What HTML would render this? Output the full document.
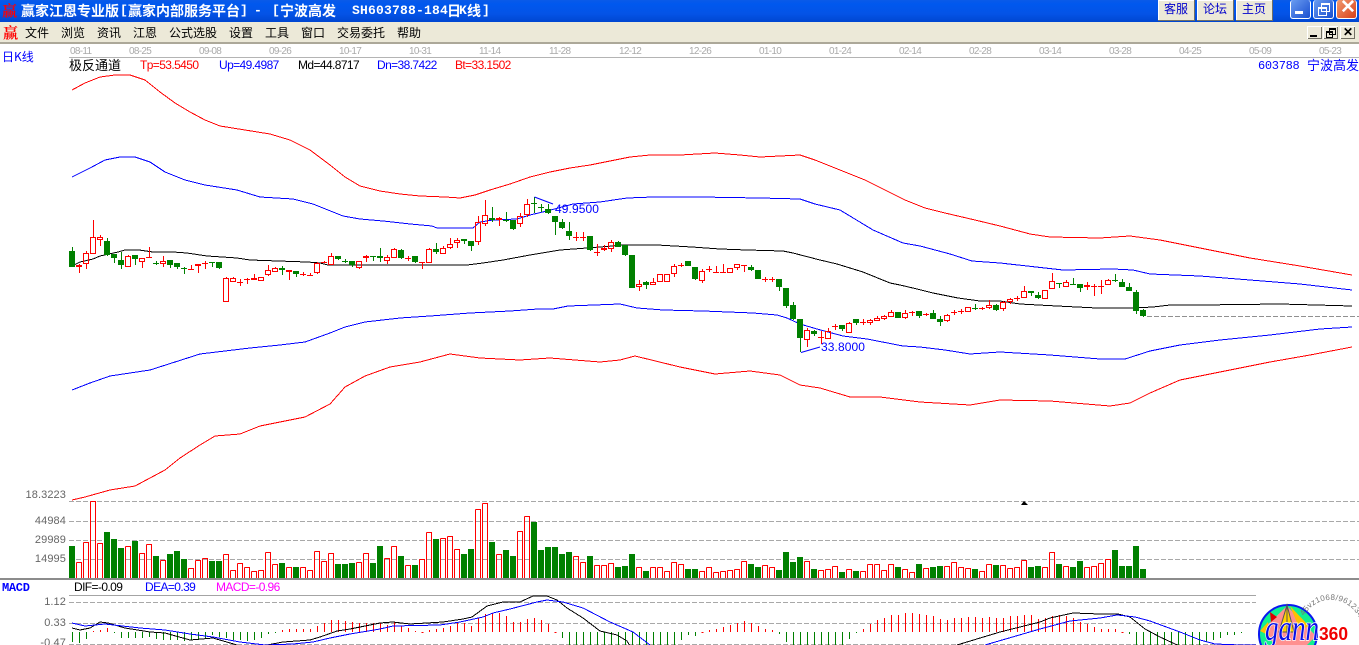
<!DOCTYPE html>
<html lang="zh"><head><meta charset="utf-8"><title>赢家江恩专业版</title>
<style>
html,body{margin:0;padding:0;background:#fff}
#p{position:relative;width:1359px;height:645px;overflow:hidden;background:#fff;font-family:"Liberation Sans","WenQuanYi Zen Hei",sans-serif}
#p div,#p span.a{position:absolute;white-space:pre}
#tb{left:0;top:0;width:1359px;height:22px;background:linear-gradient(#0a5ae8 0,#0058ee 4px,#0453e6 14px,#0046d0 22px)}
.t{top:2px;color:#fff;font:bold 14px/18px "Noto Sans CJK SC",sans-serif}
.tm{top:2px;color:#fff;font:bold 13px/18px "Liberation Mono",monospace;letter-spacing:.2px}
#mb{left:0;top:22px;width:1359px;height:20px;background:#ece9d8}
#ml{left:0;top:42px;width:1359px;height:2px;background:#aca899}
.m{top:24px;font:12px/18px "WenQuanYi Zen Hei","Noto Sans CJK SC",sans-serif;color:#000}
.b{top:0;height:20px;width:36px;background:#ece9d8;border-right:1px solid #716f64;border-bottom:1px solid #716f64;box-shadow:inset 1px 1px 0 #fff;color:#00c;text-align:center;font:12px/18px "WenQuanYi Zen Hei","Noto Sans CJK SC",sans-serif}
.d{top:46px;font:10px/11px "Liberation Sans",sans-serif;color:#aaa;letter-spacing:-.7px}
.i{top:58px;font:12px/15px "Liberation Sans",sans-serif;letter-spacing:-.6px}
.y{font:11px/12px "Liberation Sans",sans-serif;color:#666;text-align:right;width:66px;left:0;letter-spacing:.1px}
.x{border-radius:3px;top:0;width:19px;height:18px;border:1px solid #fff;border-top:0}
</style></head><body>
<div id="p">
<svg id="s" width="1359" height="645" style="position:absolute;left:0;top:0"></svg>
<div id="tb"></div>
<div style="left:2px;top:1px;color:#f00;font:bold 15px/19px 'Noto Serif CJK SC',serif">赢</div>
<div class="t" style="left:21px">赢家江恩专业版</div><div class="tm" style="left:120px">[</div>
<div class="t" style="left:128px">赢家内部服务平台</div><div class="tm" style="left:240px">]</div>
<div class="tm" style="left:254px">-</div><div class="tm" style="left:272px">[</div>
<div class="t" style="left:280px">宁波高发</div><div class="tm" style="left:352px">SH603788-184</div>
<div class="t" style="left:447px">日</div><div class="tm" style="left:459px">K</div><div class="t" style="left:467px">线</div><div class="tm" style="left:482px">]</div>
<div class="b" style="left:1158px">客服</div><div class="b" style="left:1197px">论坛</div><div class="b" style="left:1236px">主页</div>
<div class="x" style="left:1290px;background:linear-gradient(135deg,#6a9cf0,#1a4fd0)"></div>
<div style="left:1295px;top:11px;width:8px;height:3px;background:#fff"></div>
<div class="x" style="left:1313px;background:linear-gradient(135deg,#6a9cf0,#1a4fd0)"></div>
<div style="left:1318px;top:7px;width:7px;height:6px;border:1px solid #fff;border-top-width:2px"></div>
<div style="left:1321px;top:3px;width:7px;height:6px;border:1px solid #fff;border-top-width:2px"></div>
<div class="x" style="left:1336px;background:linear-gradient(135deg,#f09a70,#d8401a)"></div>
<div style="left:1340px;top:-3px;color:#fff;font:bold 19px/22px 'Liberation Sans',sans-serif">✕</div>
<div id="mb"></div><div id="ml"></div>
<div style="left:3px;top:23px;color:#f00;font:bold 15px/19px 'Noto Serif CJK SC',serif">赢</div>
<div class="m" style="left:25px">文件</div><div class="m" style="left:61px">浏览</div><div class="m" style="left:97px">资讯</div><div class="m" style="left:133px">江恩</div><div class="m" style="left:169px">公式选股</div><div class="m" style="left:229px">设置</div><div class="m" style="left:265px">工具</div><div class="m" style="left:301px">窗口</div><div class="m" style="left:337px">交易委托</div><div class="m" style="left:397px">帮助</div>
<div style="left:1307px;top:26px;width:15px;height:13px;background:#ece9d8;box-shadow:inset 1px 1px 0 #fff,inset -1px -1px 0 #716f64"></div><div style="left:1310px;top:35px;width:7px;height:2px;background:#000"></div>
<div style="left:1323px;top:26px;width:15px;height:13px;background:#ece9d8;box-shadow:inset 1px 1px 0 #fff,inset -1px -1px 0 #716f64"></div><div style="left:1326px;top:31px;width:5px;height:4px;border:1px solid #000;border-top-width:2px"></div><div style="left:1329px;top:28px;width:5px;height:4px;border:1px solid #000;border-top-width:2px"></div>
<div style="left:1340px;top:26px;width:15px;height:13px;background:#ece9d8;box-shadow:inset 1px 1px 0 #fff,inset -1px -1px 0 #716f64"></div><div style="left:1343px;top:25px;color:#000;font:bold 12px/15px 'Liberation Sans',sans-serif">✕</div>
<div class="d" style="left:70px">08-11</div><div class="d" style="left:129px">08-25</div><div class="d" style="left:199px">09-08</div><div class="d" style="left:269px">09-26</div><div class="d" style="left:339px">10-17</div><div class="d" style="left:409px">10-31</div><div class="d" style="left:479px">11-14</div><div class="d" style="left:549px">11-28</div><div class="d" style="left:619px">12-12</div><div class="d" style="left:689px">12-26</div><div class="d" style="left:759px">01-10</div><div class="d" style="left:829px">01-24</div><div class="d" style="left:899px">02-14</div><div class="d" style="left:969px">02-28</div><div class="d" style="left:1039px">03-14</div><div class="d" style="left:1109px">03-28</div><div class="d" style="left:1179px">04-25</div><div class="d" style="left:1249px">05-09</div><div class="d" style="left:1319px">05-23</div>
<div style="left:2px;top:49px;color:#00f;font:12px/15px 'WenQuanYi Zen Hei','Noto Sans CJK SC',sans-serif">日K线</div>
<div style="left:69px;top:57px;color:#000;font:13px/16px 'WenQuanYi Zen Hei','Noto Sans CJK SC',sans-serif">极反通道</div>
<div class="i" style="left:140px;color:#f00">Tp=53.5450</div><div class="i" style="left:219px;color:#00f">Up=49.4987</div><div class="i" style="left:298px;color:#000">Md=44.8717</div><div class="i" style="left:377px;color:#00f">Dn=38.7422</div><div class="i" style="left:455px;color:#f00">Bt=33.1502</div>
<div style="left:1258px;top:58px;color:#00f;font:12px/16px 'Liberation Mono',monospace;letter-spacing:-.3px">603788</div>
<div style="left:1307px;top:57px;color:#00f;font:13px/16px 'WenQuanYi Zen Hei','Noto Sans CJK SC',sans-serif">宁波高发</div>
<div style="left:555px;top:202px;color:#00f;font:12px/14px 'Liberation Sans',sans-serif;letter-spacing:.1px">49.9500</div>
<div style="left:821px;top:340px;color:#00f;font:12px/14px 'Liberation Sans',sans-serif;letter-spacing:.1px">33.8000</div>
<div class="y" style="top:489px">18.3223</div><div class="y" style="top:515px">44984</div><div class="y" style="top:534px">29989</div><div class="y" style="top:553px">14995</div>
<div style="left:2px;top:581px;color:#00f;font:bold 12px/14px 'Liberation Mono',monospace;letter-spacing:-.3px">MACD</div>
<div class="i" style="left:74px;top:580px;color:#000">DIF=-0.09</div><div class="i" style="left:145px;top:580px;color:#00f">DEA=0.39</div><div class="i" style="left:216px;top:580px;color:#f0f">MACD=-0.96</div>
<div class="y" style="top:596px">1.12</div><div class="y" style="top:617px">0.33</div><div class="y" style="top:637px">-0.47</div>
<svg width="1359" height="645" style="position:absolute;left:0;top:0">
<circle cx="1288" cy="634" r="29" fill="#10f090" stroke="#0a18f0" stroke-width="2"/>
<polygon points="1287,606 1262,630 1290,662 1316,636" fill="#ff9090"/>
<polygon points="1287,605 1279,632 1294,632" fill="#ffd000" stroke="#555" stroke-width="1"/>
<polygon points="1290,606 1309,626 1300,630" fill="#ffc000"/>
<polygon points="1270,612 1277,617 1271,622" fill="#e00000"/>
<polygon points="1268,622 1260,631 1270,636" fill="#ffc000"/>
<line x1="1287" y1="604" x2="1287" y2="640" stroke="#555"/>
<path id="arc" d="M1304 616 A30 30 0 0 1 1358 645" fill="none"/>
<text font-family="Liberation Sans" font-size="8" fill="#777" letter-spacing=".3"><textPath href="#arc">45vz1068/96123456</textPath></text>
<text x="1265" y="640" font-family="Liberation Serif" font-style="italic" font-size="36" fill="#0a10e8" stroke="#fff" stroke-width="1.5" paint-order="stroke" textLength="54" lengthAdjust="spacingAndGlyphs">gann</text>
<text x="1319" y="640" font-family="Liberation Sans" font-weight="bold" font-size="18" fill="#f00000" textLength="29" lengthAdjust="spacingAndGlyphs">360</text>
</svg>
</div>
<script>
var C=[
[183,231,171,231,0],[225,231,222,248,1],[190,221,184,237,1],[142,191,90,191,1],[142,151,136,168,1],[153,195,144,198,0],[192,204,192,219,0],[210,225,186,237,0],[199,230,196,230,1],[195,207,195,225,0],[205,215,205,234,1],[201,204,171,204,1],[218,220,212,226,0],[214,221,198,231,1],[210,225,210,234,0],[219,231,219,237,0],[235,238,231,252,0],[237,240,225,240,1],[222,228,222,249,1],[218,220,213,237,1],[216,218,216,231,0],[216,234,216,237,0],[265,335,262,335,1],[265,275,262,275,1],[276,278,268,288,1],[267,269,264,282,1],[264,269,252,269,1],[262,272,262,272,1],[241,254,225,258,1],[235,245,231,245,1],[234,240,228,255,0],[240,245,240,270,1],[243,252,243,261,0],[251,254,246,258,1],[255,257,249,258,1],[218,248,215,252,1],[216,218,212,220,1],[199,225,189,225,1],[198,207,198,210,0],[213,215,207,220,0],[213,224,213,231,0],[213,234,213,237,1],
[198,205,195,216,1],[198,200,198,213,0],[198,203,174,216,0],[202,213,196,222,1],[177,204,174,204,1],[180,204,178,207,0],[204,206,198,213,1],[198,216,198,219,0],[216,220,216,237,1],[177,219,174,219,1],[177,186,159,192,0],[174,191,168,191,1],[162,174,144,177,1],[150,158,144,174,1],[147,153,147,162,0],[153,168,153,183,0],[96,156,78,165,1],[75,102,30,108,1],[84,90,51,96,0],[84,90,81,108,1],[89,91,66,96,0],[90,117,90,120,0],[78,102,69,111,1],[42,75,27,81,1],[39,41,21,69,0],[51,53,42,66,0],[57,69,42,72,0],[78,96,78,135,0],[96,114,87,117,0],[123,138,96,150,0],[141,143,126,153,1],[141,143,126,153,1],[138,180,138,183,0],[185,187,162,198,1],[175,181,165,183,1],[156,176,150,186,1],[156,171,153,171,0],[165,195,165,198,0],[195,294,195,294,0],
[163,171,150,183,1],[156,164,153,177,0],[156,166,144,166,1],[133,155,133,155,1],[133,155,133,155,1],[109,131,102,141,1],[105,109,99,111,1],[93,107,93,107,0],[111,147,111,150,0],[124,152,118,159,1],[117,121,108,126,1],[126,128,108,128,1],[126,128,102,128,1],[115,128,115,128,1],[103,115,103,120,1],[105,107,105,126,1],[111,119,105,123,0],[120,147,120,147,0],[147,149,141,156,1],[147,149,141,156,1],[147,171,147,183,0],[174,228,174,234,0],[225,267,216,270,0],[267,324,267,367,0],[301,331,294,351,1],[303,312,300,318,0],[321,323,303,342,1],[303,326,294,326,1],[287,289,282,300,1],[286,297,286,303,0],[279,308,276,308,1],[267,279,267,285,0],[276,278,267,285,1],[270,279,267,285,1],[264,272,258,272,1],[259,267,255,270,1],[245,261,240,261,1],[246,264,246,264,0],
[160,173,150,176,1],[156,158,153,167,1],[153,168,153,174,0],[162,166,159,168,1],[159,177,150,177,0],[177,186,168,198,0],[165,182,162,186,1],[155,160,150,165,1],[153,155,147,162,1],[142,155,142,155,1],[144,146,132,150,0],[144,146,141,150,1],[135,143,120,147,1],[135,150,132,153,0],[126,147,123,153,1],[118,127,114,132,1],[115,117,108,123,1],[94,113,78,113,1],[93,99,93,108,0],[105,114,96,117,0],[90,116,90,116,1],[64,86,39,86,1],[69,71,69,84,0],[66,80,60,80,1],[71,73,54,73,0],[72,84,72,96,0],[75,80,66,90,1],[78,82,72,108,1],[78,80,60,102,1],[60,76,57,76,1],[60,62,42,66,0],[66,80,57,80,0],[81,93,69,93,0],[96,152,90,162,0],[151,167,147,171,0]];
var V=[
[183,0],[232,1],[172,1],[48,1],[175,1],[141,0],[162,0],[189,0],[184,1],[168,0],[205,1],[178,1],[213,0],[225,1],[207,0],[198,0],[222,0],[250,1],[225,1],[220,1],[228,0],[228,0],[208,1],[255,1],[235,1],[247,1],[259,1],[256,1],[202,1],[238,1],[234,0],[246,1],[246,0],[246,1],[256,1],[199,1],[229,1],[204,1],[237,0],[237,0],[234,0],
[202,1],[175,1],[204,0],[153,0],[190,1],[154,1],[183,0],[211,1],[210,0],[193,1],[112,1],[132,0],[130,1],[124,1],[163,1],[177,0],[162,0],[43,1],[25,1],[141,0],[178,1],[165,0],[183,0],[109,1],[64,1],[81,0],[165,0],[156,0],[156,0],[177,0],[171,0],[184,1],[202,1],[183,0],[211,1],[211,1],[205,1],[216,0],[213,0],[177,0],[217,1],[228,0],[217,1],[217,1],[229,1],[202,1],[208,1],[222,0],[222,0],[229,1],
[217,1],[232,1],[229,1],[226,1],[223,1],[199,1],[207,0],[216,0],[211,1],[217,1],[225,0],[171,0],[201,0],[186,0],[199,1],[222,0],[226,1],[223,1],[214,1],[231,0],[223,1],[228,0],[229,1],[208,1],[208,1],[226,1],[208,1],[216,0],[223,1],[232,1],[207,0],[220,1],[216,0],[213,0],[214,1],[202,1],[217,1],[220,1],[222,0],[229,1],[208,1],[210,0],[211,1],[220,1],[217,1],[196,1],[216,0],[213,0],[217,1],[171,1],
[207,0],[214,1],[216,0],[198,0],[217,1],[214,1],[205,1],[193,1],[165,0],[213,0],[213,0],[153,0],[222,0]];
var H=[-10,-11,-7,1,2,4,-1,-6,-6,-6,-6,-5,-7,-8,-8,-8,-9,-8,-8,-7,-3,-5,-6,-8,-8,-9,-8,-6,-2,-1,2,3,3,3,3,6,9,12,12,11,10,
9,9,9,9,7,10,6,4,1,0,2,3,4,6,9,9,6,14,18,19,19,16,10,10,13,14,12,8,0,-6,-13,-13,-13,-13,-13,-13,-13,-13,-13,-13,-13,-13,-13,-13,-13,-13,-8,-3,-4,0,
2,3,5,7,9,11,9,6,3,2,-2,-10,-13,-13,-13,-13,-13,-13,-13,-13,-7,-1,3,8,12,14,17,17,19,19,18,17,16,13,12,14,14,15,15,14,15,14,14,16,16,17,17,13,14,16,17,16,14,10,8,5,3,3,3,0,-2,-13,-13,-13,-13,-13,-13,-13,-13,-13,-13,-10,-8,-6,-3,-3,-1];
function L(s){return '<polyline fill="none" points="'+s+'"/>'}
var o='';
function dash(y,x2){o+='<path d="M69 '+(y+.5)+'H'+x2+'" stroke="#a8a8a8" stroke-dasharray="5 2" fill="none"/>'}
[501,521,540,559].forEach(function(y){dash(y,1359)});
[602,623,644].forEach(function(y){dash(y,1256)});
o+='<path d="M1147 316.5H1359" stroke="#909090" stroke-dasharray="5 2"/>';
o+='<rect x="0" y="578" width="1359" height="2" fill="#8c8c8c"/>';
o+='<rect x="69" y="57" width="1290" height="1" fill="#b4b4b4"/>';
o+='<rect x="69" y="595" width="1187" height="1" fill="#a4a4a4"/>';
var band=[["#f00","72,90 85,83 100,77 115,75 130,75 145,80 160,92 175,103 190,112 205,120 220,126 245,130 270,134 290,140 310,150 330,165 345,177 360,186 380,191 400,194 420,196 445,197 460,198 475,195 490,190 510,184 530,177 550,172 570,168 590,165 610,161 630,157 650,155 680,155 715,153 740,155 760,157 800,155 815,160 840,170 865,180 885,190 905,200 925,208 945,213 975,220 1000,226 1030,234 1050,237 1100,238 1130,236 1160,240 1200,248 1250,258 1300,266 1352,275"],
["#00f","72,177 90,168 105,160 120,157 135,157 150,162 165,172 185,180 205,185 237,190 260,197 293,199 313,204 333,212 343,216 360,219 383,221 410,224 432,226 437,228 473,228 480,222 493,220 517,219 530,215 547,211 573,204 600,202 627,198 653,197 700,197 760,198 800,199 815,204 840,210 873,230 903,243 920,246 950,254 972,261 1000,263 1027,266 1063,270 1113,269 1133,270 1150,274 1200,276 1250,280 1300,284 1352,290"],
["#000","72,266 80,262 93,259 100,256 118,252 125,250 139,250 153,252 173,252 187,253 207,256 237,258 250,260 307,262 320,263 328,265 360,265 467,265 483,263 503,260 530,255 560,250 587,248 613,246 620,245 657,245 692,247 720,249 747,250 783,251 793,253 820,260 837,264 863,272 890,283 900,285 917,289 933,293 958,298 980,301 1000,301 1020,304 1057,306 1097,308 1133,308 1153,307 1170,305 1200,305 1280,304 1352,306"],
["#00f","72,390 90,383 110,376 130,373 150,370 175,362 200,354 225,351 250,348 280,345 305,342 330,333 345,327 365,322 400,318 430,316 470,313 510,311 538,309 553,309 568,306 620,304 637,308 663,310 703,311 753,313 777,315 787,318 800,324 817,329 843,336 867,339 903,346 920,347 945,350 970,354 1000,352 1050,355 1100,359 1125,359 1150,351 1180,345 1220,340 1270,335 1320,329 1352,327"],
["#f00","72,500 85,497 110,490 135,486 150,478 165,470 180,458 200,445 215,436 240,434 260,426 280,422 305,417 330,404 345,387 365,376 390,367 420,362 450,354 480,358 520,360 550,358 600,362 620,360 635,356 680,367 715,374 750,371 780,375 800,385 820,388 850,397 880,397 920,402 970,405 1000,400 1050,401 1110,406 1130,403 1150,393 1180,380 1220,372 1270,362 1310,355 1352,347"]];
band.forEach(function(b){o+='<g stroke="'+b[0]+'" shape-rendering="crispEdges">'+L(b[1])+'</g>'});
// candles
var R='',G='',GF='';
C.forEach(function(c,i){var off=i<=80?190:i<=118?230:260;var cx=72+7*i;
var bt=Math.round(off+c[0]/3),bb=Math.round(off+c[1]/3),wt=Math.round(off+c[2]/3),wb=Math.round(off+c[3]/3);
if(bb-bt<1)bb=bt+1;
var w='';if(wt<bt)w+='M'+(cx+.5)+' '+wt+'V'+bt;if(wb>bb)w+='M'+(cx+.5)+' '+bb+'V'+wb;
if(c[4]){R+=w;
if(bb-bt<=2){R+='M'+(cx-3)+' '+(bt+.5)+'h6';if(bb-bt==2)R+='M'+(cx-3)+' '+(bt+1.5)+'h6';}
else R+='M'+(cx-2.5)+' '+(bt+.5)+'h5v'+(bb-bt-1)+'h-5z';
}else{G+=w;GF+='M'+(cx-3)+' '+bt+'h6v'+(bb-bt)+'h-6z';}
});
o+='<path d="'+G+'" stroke="#008000" fill="none" shape-rendering="crispEdges"/><path d="'+GF+'" fill="#008000" shape-rendering="crispEdges"/><path d="'+R+'" stroke="#f00" fill="none" shape-rendering="crispEdges"/>';
// markers
o+='<g stroke="#00f" fill="none"><polyline points="534.5,197 553,204"/><polyline points="801,352.5 820,347"/></g>';
o+='<polygon points="1024,501 1028,505 1021,505" fill="#000"/>';
// volume
var r2='',g2='';
V.forEach(function(v,i){var off=i<=40?485:495;var t=Math.round(off+v[0]/3),cx=72+7*i;
if(v[1])r2+='M'+(cx-2.5)+' '+(t+.5)+'h5V578M'+(cx-2.5)+' '+(t+.5)+'V578';else g2+='M'+(cx-3)+' '+t+'h6V578h-6z';});
o+='<path d="'+g2+'" fill="#008000" shape-rendering="crispEdges"/><path d="'+r2+'" stroke="#f00" fill="none" shape-rendering="crispEdges"/>';
// macd
var hr='',hg='';
H.forEach(function(h,i){var x=72+7*i+.5;if(h>0)hr+='M'+x+' 632V'+(632-h);else if(h<0)hg+='M'+x+' 632V'+(632-h);else hr+='M'+(x-1)+' 632.5h2';});
o+='<path d="'+hr+'" stroke="#f00" fill="none" shape-rendering="crispEdges"/><path d="'+hg+'" stroke="#008000" fill="none" shape-rendering="crispEdges"/>';
o+='<g stroke="#000" shape-rendering="crispEdges">'+L("72,628 80,630 90,628 100,622 108,623 125,628 150,632 165,633 190,640 213,638 237,645")+L("267,645 283,642 310,640 320,637 337,631 350,629 380,623 393,622 410,624 443,622 463,619 472,617 487,606 503,602 520,602 533,596 547,596 557,600 567,608 583,618 600,631 617,635 627,641 630,646")+L("957,645 1000,632 1040,622 1050,618 1073,613 1100,614 1118,614 1130,617 1145,629 1160,637 1175,644 1180,646")+'</g>';
o+='<g stroke="#00f" shape-rendering="crispEdges">'+L("72,623 85,626 105,624 140,628 165,630 190,634 213,637 240,642 265,645 293,644 313,642 330,638 350,634 380,629 393,626 440,625 460,622 483,617 493,613 510,609 537,602 547,600 563,602 583,608 610,622 633,632 650,645")+L("985,645 1040,629 1070,621 1100,618 1117,615 1135,617 1150,621 1180,632 1200,640 1215,644 1240,645 1256,645")+'</g>';
document.getElementById('s').innerHTML=o;
</script>
</body></html>
